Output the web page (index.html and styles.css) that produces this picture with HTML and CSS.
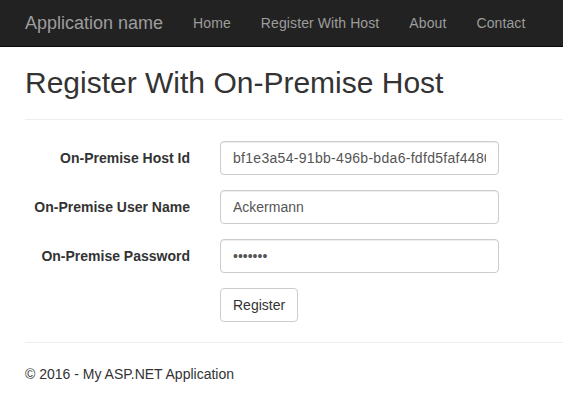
FILE: index.html
```html
<!DOCTYPE html>
<html lang="en">
<head>
<meta charset="utf-8">
<title>Register With On-Premise Host</title>
<link rel="stylesheet" href="styles.css">
</head>
<body>
<nav class="navbar">
  <a class="brand" href="#">Application name</a>
  <ul class="nav">
    <li><a href="#">Home</a></li>
    <li><a href="#">Register With Host</a></li>
    <li><a href="#">About</a></li>
    <li><a href="#">Contact</a></li>
  </ul>
</nav>
<main class="content">
  <h2 class="title">Register With On-Premise Host</h2>
  <hr class="rule">
  <form class="form">
    <div class="form-group">
      <label class="label" for="hostid">On-Premise Host Id</label>
      <input class="control control-id" id="hostid" type="text" value="bf1e3a54-91bb-496b-bda6-fdfd5faf4480">
    </div>
    <div class="form-group">
      <label class="label" for="user">On-Premise User Name</label>
      <input class="control" id="user" type="text" value="Ackermann">
    </div>
    <div class="form-group">
      <label class="label" for="pass">On-Premise Password</label>
      <input class="control" id="pass" type="password" value="1234567">
    </div>
    <div class="form-group form-group-last">
      <span></span>
      <div><button class="btn" type="button">Register</button></div>
    </div>
  </form>
  <hr class="rule rule-footer">
  <footer class="footer">
    <p>&copy; 2016 - My ASP.NET Application</p>
  </footer>
</main>
</body>
</html>
```

FILE: styles.css
```css
html, body {
  margin: 0;
  padding: 0;
}
body {
  font-family: "Liberation Sans", Arial, sans-serif;
  font-size: 14px;
  line-height: 20px;
  color: #333;
  background: #fff;
  overflow: hidden;
}
.navbar {
  display: flex;
  align-items: center;
  height: 46px;
  background: #222;
  border-bottom: 1px solid #080808;
  padding-left: 25px;
}
.brand {
  font-size: 18px;
  line-height: 20px;
  color: #9d9d9d;
  text-decoration: none;
  padding-right: 15px;
}
.nav {
  display: flex;
  list-style: none;
  margin: 0;
  padding: 0;
}
.nav a {
  display: block;
  padding: 0 15px;
  color: #9d9d9d;
  text-decoration: none;
  font-size: 14px;
  line-height: 20px;
  letter-spacing: 0.1px;
}
.content {
  padding-left: 25px;
}
.title {
  font-size: 30px;
  font-weight: 500;
  line-height: 33px;
  margin: 19px 0 0;
  color: #333;
}
.rule {
  border: 0;
  border-top: 1px solid #eee;
  margin: 20px 0 0;
  width: 100%;
}
.form {
  padding-top: 21px;
}
.form-group {
  display: grid;
  grid-template-columns: 165px 279px;
  column-gap: 30px;
  margin-bottom: 15px;
}
.form-group-last {
  margin-bottom: 0;
}
.label {
  text-align: right;
  font-weight: bold;
  padding-top: 7px;
  line-height: 20px;
}
.control {
  box-sizing: border-box;
  height: 34px;
  width: 279px;
  padding: 6px 12px;
  font-family: "Liberation Sans", Arial, sans-serif;
  font-size: 14px;
  color: #555;
  background: #fff;
  border: 1px solid #ccc;
  border-radius: 4px;
  box-shadow: inset 0 1px 1px rgba(0,0,0,.075);
  margin: 0;
}
.control-id {
  letter-spacing: 0.3px;
}
.btn {
  box-sizing: border-box;
  height: 34px;
  padding: 6px 12px;
  font-family: "Liberation Sans", Arial, sans-serif;
  font-size: 14px;
  line-height: 20px;
  color: #333;
  background: #fff;
  border: 1px solid #ccc;
  border-radius: 4px;
  margin: 0;
  display: block;
}
.rule-footer {
  margin-top: 20px;
}
.footer p {
  margin: 21px 0 0;
  font-size: 14px;
  line-height: 20px;
}
```
